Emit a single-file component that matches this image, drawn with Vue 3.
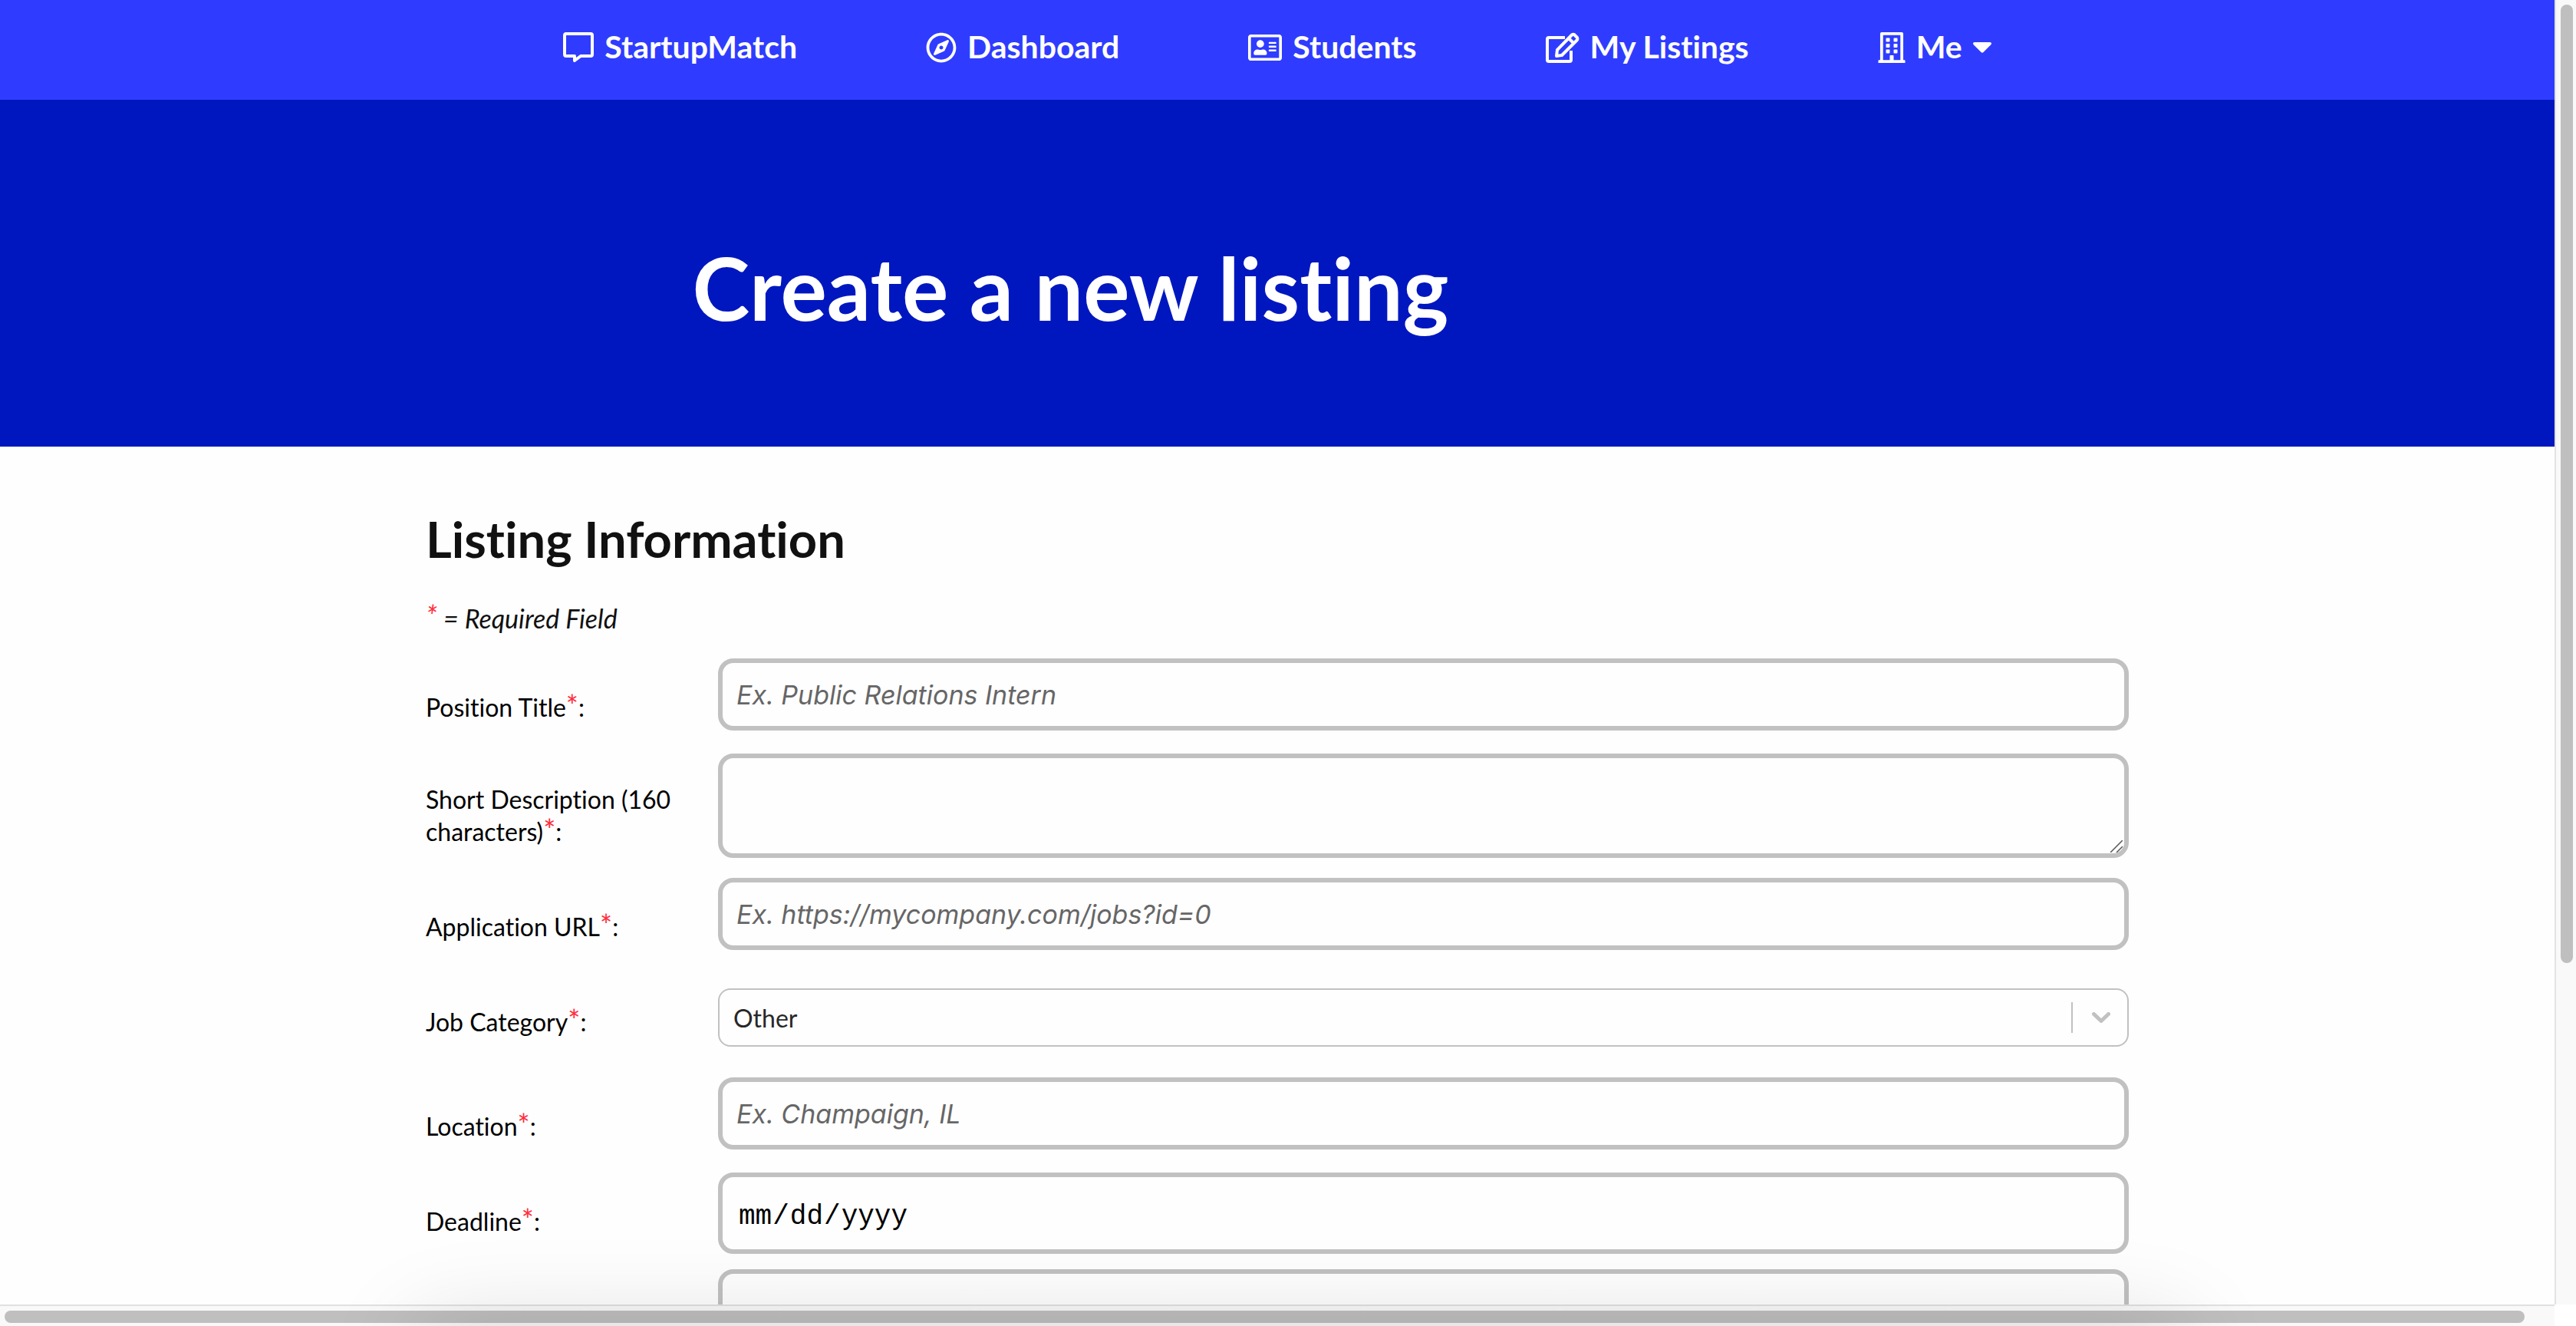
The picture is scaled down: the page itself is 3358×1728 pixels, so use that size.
<script setup>
const fields = [
  { id: 'title', label: 'Position Title', kind: 'text', placeholder: 'Ex. Public Relations Intern' },
  { id: 'summary', label: 'Short Description (160 characters)', kind: 'textarea' },
  { id: 'url', label: 'Application URL', kind: 'text', placeholder: 'Ex. https://mycompany.com/jobs?id=0' },
  { id: 'category', label: 'Job Category', kind: 'select' },
  { id: 'location', label: 'Location', kind: 'text', placeholder: 'Ex. Champaign, IL' },
  { id: 'deadline', label: 'Deadline', kind: 'date' },
]
</script>

<template>
  <div class="window">
    <div class="page">
      <nav class="nav">
        <a href="#" class="nav-item">
          <svg class="icon" viewBox="0 0 40 40" fill="none" stroke="currentColor" stroke-width="4" stroke-linejoin="round">
            <path d="M4 2H36A2 2 0 0 1 38 4V29A2 2 0 0 1 36 31H23L15 37V31H4A2 2 0 0 1 2 29V4A2 2 0 0 1 4 2Z" />
          </svg>
          <span>StartupMatch</span>
        </a>
        <a href="#" class="nav-item">
          <svg class="icon" viewBox="0 0 496 512" fill="currentColor">
            <path d="M347.940 129.860L203.600 195.830a31.938 31.938 0 0 0-15.770 15.770l-65.970 144.340c-7.610 16.650 9.540 33.810 26.200 26.200l144.340-65.970a31.938 31.938 0 0 0 15.770-15.770l65.970-144.340c7.600-16.660-9.540-33.810-26.200-26.200zm-77.360 148.720c-12.470 12.470-32.690 12.470-45.160 0-12.470-12.470-12.470-32.690 0-45.160 12.470-12.470 32.690-12.470 45.160 0 12.470 12.470 12.470 32.690 0 45.160zM248 8C111.030 8 0 119.030 0 256s111.030 248 248 248 248-111.030 248-248S384.970 8 248 8zm0 448c-110.280 0-200-89.720-200-200S137.720 56 248 56s200 89.720 200 200-89.720 200-200 200z" />
          </svg>
          <span>Dashboard</span>
        </a>
        <a href="#" class="nav-item">
          <svg class="icon wide" viewBox="0 0 576 512" fill="currentColor">
            <path d="M528 32H48C21.500 32 0 53.500 0 80v352c0 26.500 21.500 48 48 48h480c26.500 0 48-21.500 48-48V80c0-26.500-21.500-48-48-48zm0 400H48V80h480v352zM208 256c35.300 0 64-28.700 64-64s-28.700-64-64-64-64 28.700-64 64 28.700 64 64 64zm-89.600 128h179.200c12.400 0 22.400-8.600 22.400-19.200v-19.200c0-31.800-30.100-57.600-67.200-57.600-10.800 0-18.700 8-44.800 8-26.900 0-33.400-8-44.800-8-37.100 0-67.200 25.800-67.200 57.600v19.200c0 10.600 10 19.200 22.400 19.200zM360 320h112c4.400 0 8-3.600 8-8v-16c0-4.400-3.600-8-8-8H360c-4.400 0-8 3.600-8 8v16c0 4.400 3.600 8 8 8zm0-64h112c4.400 0 8-3.600 8-8v-16c0-4.400-3.600-8-8-8H360c-4.400 0-8 3.600-8 8v16c0 4.400 3.600 8 8 8zm0-64h112c4.400 0 8-3.600 8-8v-16c0-4.400-3.600-8-8-8H360c-4.400 0-8 3.600-8 8v16c0 4.400 3.600 8 8 8z" />
          </svg>
          <span>Students</span>
        </a>
        <a href="#" class="nav-item">
          <svg class="icon wide" viewBox="0 0 44 40" fill="none" stroke="currentColor" stroke-width="4" stroke-linejoin="round">
            <path d="M25 7H4A2 2 0 0 0 2 9V36A2 2 0 0 0 4 38H31A2 2 0 0 0 33 36V24" />
            <path d="M14 31L15 23L34 3.500A3.500 3.500 0 0 1 37 3L41 7A3.500 3.500 0 0 1 41 10L21 30ZM30 8L36 14" />
          </svg>
          <span>My Listings</span>
        </a>
        <button type="button" class="nav-item">
          <svg class="icon narrow" viewBox="0 0 448 512" fill="currentColor">
            <path d="M128 148v-40c0-6.600 5.400-12 12-12h40c6.600 0 12 5.400 12 12v40c0 6.600-5.400 12-12 12h-40c-6.600 0-12-5.400-12-12zm140 12h40c6.600 0 12-5.400 12-12v-40c0-6.600-5.400-12-12-12h-40c-6.600 0-12 5.400-12 12v40c0 6.600 5.400 12 12 12zm-128 96h40c6.600 0 12-5.400 12-12v-40c0-6.600-5.400-12-12-12h-40c-6.600 0-12 5.400-12 12v40c0 6.600 5.400 12 12 12zm128 0h40c6.600 0 12-5.400 12-12v-40c0-6.600-5.400-12-12-12h-40c-6.600 0-12 5.400-12 12v40c0 6.600 5.400 12 12 12zm-76 84v-40c0-6.600-5.400-12-12-12h-40c-6.600 0-12 5.400-12 12v40c0 6.600 5.400 12 12 12h40c6.600 0 12-5.400 12-12zm76 12h40c6.600 0 12-5.400 12-12v-40c0-6.600-5.400-12-12-12h-40c-6.600 0-12 5.400-12 12v40c0 6.600 5.400 12 12 12zm180 124v36H0v-36c0-6.600 5.400-12 12-12h19.500V24c0-13.300 10.700-24 24-24h337c13.300 0 24 10.700 24 24v440H436c6.600 0 12 5.400 12 12zM79.500 463H192v-67c0-6.600 5.400-12 12-12h40c6.600 0 12 5.400 12 12v67h112.500V49L80 48l-.500 415z" />
          </svg>
          <span>Me</span>
          <svg class="caret" viewBox="0 0 24 14" fill="currentColor">
            <path d="M2 0H22C24 0 24.500 2 23.300 3.200L13.500 13C12.700 14 11.300 14 10.500 13L.7 3.200C-.5 2 0 0 2 0Z" />
          </svg>
        </button>
      </nav>

      <header class="hero">
        <h1>Create a new listing</h1>
      </header>

      <form class="form">
        <h2>Listing Information</h2>
        <p class="note"><span class="star">*</span> = Required Field</p>

        <div v-for="f in fields" :key="f.id" class="row" :class="f.kind">
          <label :for="f.id">{{ f.label }}<span class="star">*</span>:</label>
          <div v-if="f.kind === 'textarea'" class="area-wrap">
            <textarea :id="f.id" class="box"></textarea>
            <svg class="grip" viewBox="0 0 16 16" stroke="currentColor" stroke-width="1.500">
              <path d="M0 16L16 0M8 16L16 8" />
            </svg>
          </div>
          <div v-else-if="f.kind === 'select'" class="select-wrap">
            <select :id="f.id"><option>Other</option></select>
            <span class="picker">
              <svg viewBox="0 0 24 14" fill="none" stroke="currentColor" stroke-width="5" stroke-linecap="round" stroke-linejoin="round">
                <path d="M2.500 2.500L12 11.500L21.500 2.500" />
              </svg>
            </span>
          </div>
          <input v-else :id="f.id" :type="f.kind" class="box" :placeholder="f.placeholder" />
        </div>
        <div class="row textarea">
          <span></span>
          <textarea class="box" aria-label="Full description"></textarea>
        </div>
      </form>
    </div>

    <div class="track vertical"><div class="thumb"></div></div>
    <div class="track horizontal"><div class="thumb"></div></div>
    <div class="corner"></div>
    <div class="dock-shadow"></div>
  </div>
</template>

<style>
body {
  margin: 0;
  background: #fff;
}
</style>

<style scoped>
* {
  box-sizing: border-box;
}
.window {
  position: relative;
  display: grid;
  grid-template: minmax(0, 1fr) 28px / minmax(0, 1fr) 28px;
  height: 100vh;
  overflow: hidden;
  font-family: Lato, sans-serif;
  font-variant-ligatures: none;
  color: #000;
}
.page {
  overflow: hidden;
  background: #fefefe;
}
.nav {
  display: flex;
  justify-content: center;
  gap: 168px;
  height: 130px;
  padding-top: 38px;
  background: #2f3cff;
}
.nav-item {
  display: flex;
  align-items: center;
  gap: 14px;
  height: 48px;
  padding: 0;
  border: 0;
  background: none;
  color: #fff;
  font: 700 41px/46px Lato, sans-serif;
  font-variant-ligatures: none;
  text-decoration: none;
}
.nav-item span {
  padding-bottom: 2px;
}
.icon {
  width: 40px;
  height: 40px;
}
.icon.wide {
  width: 44px;
}
.icon.narrow {
  width: 36px;
}
.caret {
  width: 24px;
  height: 14px;
}
.hero {
  height: 452px;
  padding: 176px 0 0 27.1%;
  background: #0017bf;
}
h1 {
  margin: 0;
  color: #fff;
  font-size: 113px;
  line-height: 136px;
}
.form {
  width: 66.667%;
  margin: 0 auto;
  padding-top: 80px;
}
h2 {
  margin: 0;
  color: #111;
  font-size: 65px;
  line-height: 80px;
}
.note {
  margin: 42px 0 30px;
  font-size: 34px;
  line-height: 44px;
  font-style: italic;
  color: #111;
}
.star {
  color: #ff2c3c;
  font-size: 38px;
  line-height: 0;
}
.note .star {
  vertical-align: 2px;
}
.row {
  display: grid;
  grid-template-columns: 340px minmax(0, 1fr);
  column-gap: 41px;
  align-items: start;
  margin-bottom: 30px;
}
.row.textarea {
  margin-bottom: 26px;
}
.row.select {
  margin-bottom: 40px;
}
.row.date {
  margin-bottom: 20px;
}
label {
  padding-top: 43px;
  font-size: 32px;
  line-height: 42px;
}
.textarea label {
  padding-top: 39px;
}
.box {
  display: block;
  width: 100%;
  height: 94px;
  margin: 0;
  padding: 0 18px;
  border: 6px solid #c1c1c1;
  border-radius: 20px;
  background: transparent;
  color: #000;
  font: 34px Inter, sans-serif;
}
.box::placeholder {
  color: #666;
  font-style: italic;
  opacity: 1;
}
.area-wrap {
  position: relative;
}
textarea.box {
  height: 136px;
  resize: none;
}
.grip {
  position: absolute;
  right: 8px;
  bottom: 7px;
  width: 16px;
  height: 16px;
  color: #555;
  pointer-events: none;
}
.date .box {
  height: 106px;
  padding: 8px 20px 0;
  font: 36px "Liberation Mono", monospace;
}
.date .box::-webkit-calendar-picker-indicator {
  display: none;
}
.select-wrap {
  position: relative;
  margin-top: 20px;
}
select {
  display: block;
  width: 100%;
  height: 76px;
  padding: 0 18px;
  border: 2px solid #c1c1c1;
  border-radius: 16px;
  background: transparent;
  color: #282828;
  appearance: none;
  font: 32px Lato, sans-serif;
}
.picker {
  position: absolute;
  top: 18px;
  right: 0;
  display: flex;
  align-items: center;
  justify-content: center;
  width: 75px;
  height: 40px;
  border-left: 2px solid #c1c1c1;
  color: #c1c1c1;
  pointer-events: none;
}
.picker svg {
  width: 24px;
  height: 14px;
}
.track {
  background: #f9f9f9;
}
.vertical {
  border-left: 2px solid #e2e2e2;
  padding: 6px;
}
.horizontal {
  border-top: 2px solid #e0e0e0;
  padding: 6px;
}
.thumb {
  border-radius: 8px;
  background: #bfbfbf;
}
.vertical .thumb {
  width: 16px;
  height: 74%;
}
.horizontal .thumb {
  width: 99%;
  height: 16px;
}
.corner {
  background: #fff;
}
.dock-shadow {
  position: absolute;
  top: 100%;
  left: 16%;
  right: 15%;
  height: 100px;
  border-radius: 40px;
  box-shadow: 0 0 120px rgba(0, 0, 0, 0.15);
  pointer-events: none;
}
</style>
